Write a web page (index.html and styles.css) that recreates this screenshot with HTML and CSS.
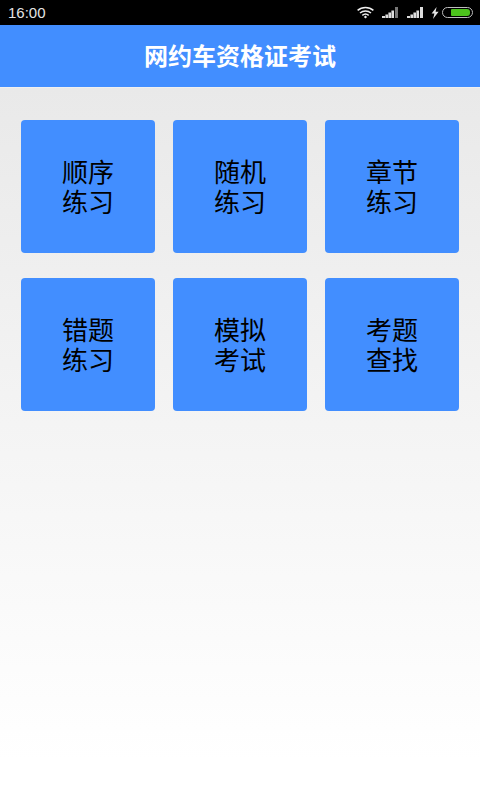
FILE: index.html
```html
<!DOCTYPE html>
<html lang="zh-CN">
<head>
    <meta charset="UTF-8">
    <meta name="viewport" content="width=device-width, initial-scale=1.0">
    <title>网约车资格证考试</title>
    <link rel="stylesheet" href="styles.css">
</head>
<body>
    <div class="status-bar">
        <span class="status-time">16:00</span>
        <div class="status-icons">
            <svg class="icon-wifi" width="17" height="13" viewBox="0 0 17 13">
                <path d="M0.6 4.4C5 0.4 12 0.4 16.4 4.4" fill="none" stroke="#eee" stroke-width="1.5"/>
                <path d="M3 7C6.2 4.2 10.8 4.2 14 7" fill="none" stroke="#eee" stroke-width="1.5"/>
                <path d="M5.3 9.4C7.2 7.8 9.8 7.8 11.7 9.4" fill="none" stroke="#eee" stroke-width="1.5"/>
                <path d="M6.9 10.9L8.5 9.6L10.1 10.9L8.5 12.6Z" fill="#eee"/>
            </svg>
            <svg class="icon-signal" width="16" height="11" viewBox="0 0 16 11">
                <path d="M0 9h3v2H0zM3.400 7.400h2.600V11H3.400zM6.400 5.600h2.600V11H6.400zM9.400 3.400h2.600V11H9.400z" fill="#ddd"/>
                <path d="M13 0h3v11h-3z" fill="#777"/>
            </svg>
            <svg class="icon-signal" width="16" height="11" viewBox="0 0 16 11">
                <path d="M0 9h3v2H0zM3.400 7.400h2.600V11H3.400zM6.400 5.600h2.600V11H6.400zM9.400 3.400h2.600V11H9.400zM13 0h3v11h-3z" fill="#ddd"/>
            </svg>
            <svg class="icon-bolt" width="8" height="12" viewBox="0 0 8 12">
                <path d="M5.600 0L0.600 6.600H3.400L2 12L7.600 4.700H4.600Z" fill="#e4e4e4"/>
            </svg>
            <div class="battery">
                <div class="battery-level"></div>
            </div>
        </div>
    </div>

    <div class="title-bar">网约车资格证考试</div>

    <div class="menu">
        <div class="menu-item">顺序<br>练习</div>
        <div class="menu-item">随机<br>练习</div>
        <div class="menu-item">章节<br>练习</div>
        <div class="menu-item">错题<br>练习</div>
        <div class="menu-item">模拟<br>考试</div>
        <div class="menu-item">考题<br>查找</div>
    </div>
</body>
</html>
```

FILE: styles.css
```css
html, body {
    height: 100%;
}

body {
    margin: 0;
    font-family: "Noto Sans CJK SC", "Liberation Sans", sans-serif;
    background: linear-gradient(180deg, #e9e9e9 88px, #ffffff 760px);
}

.status-bar {
    height: 25px;
    background-color: #000;
    color: #e4e4e4;
    display: flex;
    justify-content: space-between;
    align-items: center;
    padding: 0 7px 0 8px;
}

.status-time {
    font-family: "Liberation Sans", sans-serif;
    font-size: 15px;
}

.status-icons {
    display: flex;
    align-items: center;
}

.icon-wifi {
    margin-right: 8px;
}

.icon-signal {
    margin-right: 9px;
}

.icon-bolt {
    margin-left: -1px;
    margin-right: 3px;
}

.battery {
    width: 31px;
    height: 11px;
    box-sizing: border-box;
    border: 1px solid #bdbdbd;
    border-radius: 6px;
    padding: 1px 2px 1px 8px;
}

.battery-level {
    height: 100%;
    background-color: #4cc31c;
    border-radius: 1px 3px 3px 1px;
}

.title-bar {
    height: 63px;
    line-height: 60px;
    background-color: #428eff;
    color: #fff;
    text-align: center;
    font-size: 24px;
    font-weight: bold;
    border-bottom: 1px solid #f0f0f0;
    box-sizing: border-box;
}

.menu {
    display: grid;
    grid-template-columns: repeat(3, 134px);
    grid-auto-rows: 133px;
    column-gap: 18px;
    row-gap: 25px;
    padding: 32px 21px 0;
}

.menu-item {
    background-color: #428eff;
    border-radius: 4px;
    display: flex;
    align-items: center;
    justify-content: center;
    text-align: center;
    color: #000;
    font-size: 26px;
    line-height: 30px;
    padding-bottom: 2px;
    box-sizing: border-box;
}
```
